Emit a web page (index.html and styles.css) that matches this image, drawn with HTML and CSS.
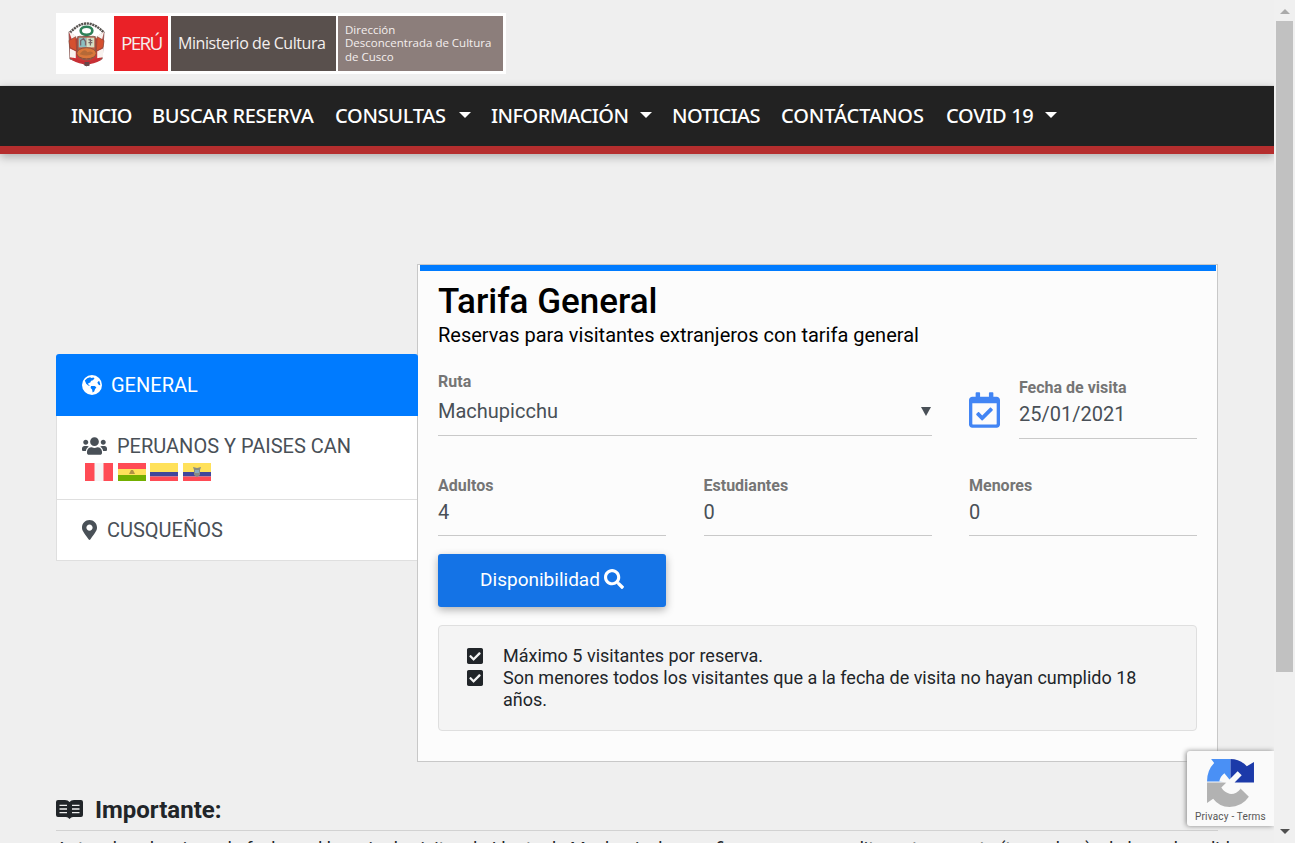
FILE: index.html
```html
<!DOCTYPE html>
<html lang="es">
<head>
<meta charset="utf-8">
<title>Reservas Machupicchu</title>
<link rel="stylesheet" href="styles.css">
</head>
<body>
<div class="page">
<header class="top">
  <div class="brand">
    <svg class="crest" viewBox="0 0 40 48">
      <path d="M3 13Q20-6 38 13" fill="none" stroke="#575350" stroke-width="2.5" stroke-dasharray="2.200 .7"/>
      <path d="M2 12l8 6 10-5 10 5 8-6-2 28-10 3-6 4-6-4-11-3z" fill="#ce3435" stroke="#74524c" stroke-width=".8"/>
      <path d="M2 12l9 5 9-5 9 5 9-5-2 8-8-2-8-2-8 2-7 2zM3 29l6 3v7l-6-1zM37 29l-6 3v7l6-1z" fill="#f8f2ee"/>
      <path d="M2 21l7-4 1 15-7-4zM38 21l-7-4-1 15 7-4z" fill="#d5502f" stroke="#894a3c" stroke-width=".7"/>
      <path d="M11 17h18v20q-9 8-18 0z" fill="#c85b43" stroke="#7e5b4e"/>
      <path d="M12 18h8v10h-8z" fill="#8bbfc0"/><path d="M20 18h8v10h-8z" fill="#d5dfc5"/>
      <path d="M14 26v-5l3-2 2 3v4M24 26v-7m-2 1l4 1m-4 2h4" stroke="#75666b" stroke-width="1.300" fill="none"/>
      <ellipse cx="20" cy="34" rx="10" ry="5.700" fill="#da783b" stroke="#8c503c"/>
      <path d="M13 35q5-7 8-2 4-2 6 1-5 4-14 1" fill="#b56937"/>
      <ellipse cx="20" cy="11" rx="6" ry="4.200" fill="#fff" stroke="#2f8159" stroke-width="2.700"/>
      <path d="M6 40q14 8 28 0" stroke="#c72f35" stroke-width="3" fill="none"/><path d="M18 43h5v4h-5z" fill="#68474a"/>
    </svg>
    <div class="peru">PERÚ</div><div class="ministry">Ministerio de Cultura</div>
    <div class="office">Dirección<br>Desconcentrada de Cultura<br>de Cusco</div>
  </div>
</header>
<nav class="nav">
  <a>INICIO</a><a>BUSCAR RESERVA</a><a class="drop">CONSULTAS</a><a class="drop">INFORMACIÓN</a><a>NOTICIAS</a><a>CONTÁCTANOS</a><a class="drop">COVID 19</a>
</nav>
<main class="main">
  <aside class="tabs">
    <div class="tab active"><svg class="i-globe" viewBox="0 0 20 20"><circle cx="10" cy="10" r="10" fill="#fff"/><path d="M2.800 5.500Q5 2.700 8 2.200l1.500.9 2-.6 1 1.200-2.100 1.700-1.300.3-.8 1.700-1.400.5-1.200 1.100 1.200.8 1 1.100-1.700-.4-2-1.800zM9 11h3.600l1.800 1.300-1.400 1.900-.8 2.400-1.600 1-.5-3.200L8.600 13zM15.300 7.800l1.400-1.900.8.6.9 3.700-1.500-.1z" fill="#007bff"/></svg><span>GENERAL</span></div>
    <div class="tab can"><div class="line"><svg class="i-users" viewBox="0 0 640 512"><path d="M96 224c35.3 0 64-28.7 64-64s-28.7-64-64-64-64 28.7-64 64 28.7 64 64 64zm448 0c35.3 0 64-28.7 64-64s-28.7-64-64-64-64 28.7-64 64 28.7 64 64 64zm32 32h-64c-17.6 0-33.5 7.1-45.1 18.6 40.3 22.1 68.9 62 75.1 109.4h66c17.7 0 32-14.3 32-32v-32c0-35.3-28.7-64-64-64zm-256 0c61.9 0 112-50.1 112-112S381.9 32 320 32 208 82.1 208 144s50.1 112 112 112zm76.8 32h-8.3c-20.8 10-43.9 16-68.5 16s-47.6-6-68.5-16h-8.3C179.6 288 128 339.6 128 403.2V432c0 26.5 21.5 48 48 48h288c26.5 0 48-21.5 48-48v-28.8c0-63.6-51.6-115.2-115.2-115.2zm-223.7-13.4C161.5 263.1 145.6 256 128 256H64c-35.3 0-64 28.7-64 64v32c0 17.7 14.3 32 32 32h65.9c6.3-47.4 34.9-87.3 75.2-109.4z"/></svg><span>PERUANOS Y PAISES CAN</span></div>
      <div class="flags">
        <svg viewBox="0 0 28 18"><path fill="#f4f4f5" d="M0 0h28v18H0z"/><path fill="#ff4b55" d="M0 0h9.5v18H0zM18.5 0H28v18h-9.5z"/></svg>
        <svg viewBox="0 0 28 18"><path fill="#ff4b55" d="M0 0h28v6H0z"/><path fill="#ffe15a" d="M0 6h28v6H0z"/><path fill="#73af00" d="M0 12h28v6H0z"/><path d="M11 11l2-4h2l2 4z" fill="#b39143"/></svg>
        <svg viewBox="0 0 28 18"><path fill="#ffe15a" d="M0 0h28v9H0z"/><path fill="#41479b" d="M0 9h28v4.5H0z"/><path fill="#ff4b55" d="M0 13.500h28V18H0z"/></svg>
        <svg viewBox="0 0 28 18"><path fill="#ffe15a" d="M0 0h28v9H0z"/><path fill="#41479b" d="M0 9h28v4.500H0z"/><path fill="#ff4b55" d="M0 13.500h28V18H0z"/><path d="M10 4l4 1 4-1-1 3v5l-3 2-3-2V7z" fill="#888b83"/><path d="M12 7h4v3h-4z" fill="#8ba9bb"/></svg>
      </div></div>
    <div class="tab cusco"><svg class="i-pin" viewBox="0 0 384 512"><path d="M172.268 501.670C26.970 291.031 0 269.413 0 192 0 85.961 85.961 0 192 0s192 85.961 192 192c0 77.413-26.970 99.031-172.268 309.670-9.535 13.774-29.930 13.773-39.464 0zM192 272c44.183 0 80-35.817 80-80s-35.817-80-80-80-80 35.817-80 80 35.817 80 80 80z"/></svg><span>CUSQUEÑOS</span></div>
  </aside>
  <section class="card">
    <div class="accent"></div>
    <h1>Tarifa General</h1>
    <p class="sub">Reservas para visitantes extranjeros con tarifa general</p>
    <div class="row first">
      <div class="field route"><label>Ruta</label><div class="value"><span>Machupicchu</span><i class="arrow"></i></div></div>
      <div class="date"><svg class="i-cal" viewBox="0 0 448 512"><path d="M400 64h-48V12c0-6.627-5.373-12-12-12h-40c-6.627 0-12 5.373-12 12v52H160V12c0-6.627-5.373-12-12-12h-40c-6.627 0-12 5.373-12 12v52H48C21.490 64 0 85.490 0 112v352c0 26.510 21.490 48 48 48h352c26.510 0 48-21.490 48-48V112c0-26.510-21.490-48-48-48zm-6 400H54a6 6 0 0 1-6-6V160h352v298a6 6 0 0 1-6 6zm-52.849-200.650L198.842 404.519c-4.705 4.667-12.303 4.637-16.971-.068l-75.091-75.699c-4.667-4.705-4.637-12.303.068-16.971l22.719-22.536c4.705-4.667 12.303-4.637 16.970.069l44.104 44.461 111.072-110.181c4.705-4.667 12.303-4.637 16.971.068l22.536 22.718c4.667 4.705 4.636 12.303-.069 16.970z"/></svg>
        <div class="field"><label>Fecha de visita</label><div class="value"><span>25/01/2021</span></div></div></div>
    </div>
    <div class="row people">
      <div class="field"><label>Adultos</label><div class="value">4</div></div>
      <div class="field"><label>Estudiantes</label><div class="value">0</div></div>
      <div class="field"><label>Menores</label><div class="value">0</div></div>
    </div>
    <button class="search"><span>Disponibilidad</span><svg viewBox="0 0 512 512"><path d="M505 442.700L405.300 343c-4.500-4.500-10.600-7-17-7H372c27.600-35.300 44-79.700 44-128C416 93.100 322.900 0 208 0S0 93.100 0 208s93.100 208 208 208c48.300 0 92.700-16.400 128-44v16.300c0 6.400 2.500 12.500 7 17l99.700 99.700c9.400 9.400 24.600 9.400 33.900 0l28.300-28.300c9.400-9.400 9.400-24.600.1-34zM208 336c-70.700 0-128-57.200-128-128 0-70.700 57.200-128 128-128 70.700 0 128 57.200 128 128 0 70.700-57.200 128-128 128z"/></svg></button>
    <div class="notes">
      <div class="note"><svg viewBox="0 32 448 448"><path d="M400 480H48c-26.510 0-48-21.490-48-48V80c0-26.510 21.490-48 48-48h352c26.510 0 48 21.490 48 48v352c0 26.510-21.490 48-48 48zm-204.686-98.059l184-184c6.248-6.248 6.248-16.379 0-22.627l-22.627-22.627c-6.248-6.248-16.379-6.249-22.628 0L184 302.745l-70.059-70.059c-6.248-6.248-16.379-6.248-22.628 0l-22.627 22.627c-6.248 6.248-6.248 16.379 0 22.627l104 104c6.249 6.250 16.379 6.250 22.628.001z"/></svg><span>Máximo 5 visitantes por reserva.</span></div>
      <div class="note"><svg viewBox="0 32 448 448"><path d="M400 480H48c-26.510 0-48-21.490-48-48V80c0-26.510 21.490-48 48-48h352c26.510 0 48 21.490 48 48v352c0 26.510-21.490 48-48 48zm-204.686-98.059l184-184c6.248-6.248 6.248-16.379 0-22.627l-22.627-22.627c-6.248-6.248-16.379-6.249-22.628 0L184 302.745l-70.059-70.059c-6.248-6.248-16.379-6.248-22.628 0l-22.627 22.627c-6.248 6.248-6.248 16.379 0 22.627l104 104c6.249 6.250 16.379 6.250 22.628.001z"/></svg><span>Son menores todos los visitantes que a la fecha de visita no hayan cumplido 18 años.</span></div>
    </div>
  </section>
</main>
<section class="important">
  <h2><svg viewBox="0 0 27 20"><path d="M0 2Q0 0 2 0h7q3 0 4.500 2Q15 0 18 0h7q2 0 2 2v13q0 2-2 2h-8q-2 0-3.500 2Q12 17 10 17H2q-2 0-2-2z"/><path d="M3.500 5.300h7.500M3.500 9h7.500M3.500 12.700h7.500M16 5.300h7.500M16 9h7.500M16 12.700h7.500" stroke="#efefef" stroke-width="1.300"/></svg><span>Importante:</span></h2>
  <p>Antes de seleccionar la fecha y el horario de visita a la Llaqta de Machupicchu, confirme que se acredite su transporte (tren o bus) y la hora de salida.</p>
</section>
</div>
<div class="scroll"><i class="up"></i><div class="thumb"></div><i class="down"></i></div>
<div class="captcha">
  <svg viewBox="0 0 46 48"><path d="M23 1v22H0Q0 12 7 5L4 1z" fill="#4a90f5"/><path d="M23 1q9 0 16 7l7-4v20H23z" fill="#1c3aa9"/><path d="M0 24h23l10 6 8 8Q34 48 22 48 12 48 6 40l-6 4z" fill="#b2b2b2"/><path d="M12 23q1-5 5-8l5 6 8-8 4 4-7 7 6 6q-5 6-11 5-5-1-8-6l5-5z" fill="#fafafa"/></svg>
  <span>Privacy - Terms</span>
</div>
</body>
</html>
```
FILE: styles.css
```css
*{box-sizing:border-box}
body{margin:0;display:flex;width:1295px;height:843px;overflow:hidden;background:#efefef;font-family:Roboto,sans-serif;color:#212529}
.page{width:1274px;height:843px;overflow:hidden;flex:none}
svg{display:block;flex:none}
.top{height:86px;padding:13px 56px;border-bottom:1px solid #e3e3e3}
.brand{width:450px;height:61px;background:#fff;padding:3px 3px 3px 11px;display:flex;font-family:"Open Sans",sans-serif;color:#f4efee}
.crest{width:39px;height:49px;margin:3px 8px 0 0}
.peru{width:54px;height:55px;background:#ea2127;font-size:19px;line-height:54px;padding-left:7px;letter-spacing:-1.7px}
.ministry{width:165px;height:55px;background:#59504d;margin-left:3px;padding-left:7px;font-size:16px;line-height:54px;white-space:nowrap;letter-spacing:-.44px}
.office{width:165px;height:55px;background:#8c7e7b;margin-left:2px;padding:7px 0 0 7px;font-size:11.5px;line-height:13.3px;white-space:nowrap}
.nav{height:68px;background:#222;border-bottom:8px solid #b52e2e;box-shadow:0 3px 9px rgba(0,0,0,.28);padding-left:71px;display:flex;align-items:center;gap:20px;font:500 20px/30px "Noto Sans",sans-serif;color:#fff}
.nav a{display:flex;align-items:center;white-space:nowrap;letter-spacing:-.3px}
.nav a:nth-child(1){width:61px;letter-spacing:-.75px}
.nav a:nth-child(2){width:163px}
.nav a:nth-child(3){width:136px;justify-content:space-between}
.nav a:nth-child(4){width:161px;justify-content:space-between;letter-spacing:-.55px}
.nav a:nth-child(5){width:89px;letter-spacing:-.6px}
.nav a:nth-child(6){width:145px;letter-spacing:-.1px}
.nav a:nth-child(7){width:111px;justify-content:space-between}
.drop::after{content:"";border:6px solid transparent;border-top-color:#fff;border-bottom:0;margin:-2px 0 0}
.main{display:flex;margin:110px 56px 0;height:498px}
.tabs{width:361px;margin-top:90px;font-size:20px;color:#495057;fill:#495057;position:relative;z-index:1}
.tab{background:#fff;border:1px solid #dfdfdf;border-top:0;border-right:0;padding-left:25px}
.active{height:62px;width:362px;background:#007bff;border:0;border-radius:3px 3px 0 0;display:flex;align-items:center;color:#fff;padding-left:26px}
.i-globe{width:20px;height:20px;margin-right:9px}
.can{height:84px;padding-top:16px}
.line{display:flex;align-items:center;height:28px}
.i-users{width:25px;height:20px;margin-right:10px}
.flags{display:flex;gap:4.700px;margin:3px 0 0 3px}
.flags svg{width:28px;height:18px}
.cusco{height:61px;display:flex;align-items:center}
.i-pin{width:15px;height:20px;margin-right:10px}
.card{width:801px;height:498px;background:#fcfcfc;border:1px solid #c8c8c8;padding:0 20px}
.accent{height:6px;margin:0 -19px 0 -18px;background:#007bff}
h1{font-size:35px;line-height:42px;font-weight:500;color:#000;margin:10px 0 0}
.sub{font-size:20px;line-height:24px;color:#000;margin:0}
.row{display:flex;justify-content:space-between}
.field{width:228px;border-bottom:1px solid #c9c9c9}
label{display:block;font-size:16px;font-weight:700;line-height:20px;padding-top:1px;color:#757575}
.value{font-size:20px;line-height:24px;color:#495057;display:flex;justify-content:space-between}
.first{height:92px;margin-top:24px}
.route{width:494px;height:65px}
.route .value{margin-top:7px}
.arrow{border:5px solid transparent;border-top:9px solid #495057;border-bottom:0;align-self:center;margin-right:1px}
.date{display:flex;width:228px}
.date .field{width:178px;height:62px;margin:6px 0 0 19px}
.date .value,.people .value{margin-top:4px}
.i-cal{width:31px;height:36px;margin-top:21px;fill:#4285f4}
.people{margin-top:12px}
.people .field{height:61px}
.search{display:flex;align-items:center;justify-content:center;gap:4px;width:228px;height:53px;margin-top:18px;border:0;border-radius:3px;background:#1473e6;box-shadow:0 3px 8px rgba(0,0,0,.3);font:19px Roboto,sans-serif;color:#fff;padding-bottom:4px}
.search svg{width:20px;height:20px;fill:#fff}
.notes{height:106px;margin-top:18px;border:1px solid #dfdfdf;border-radius:4px;background:#f4f4f4;padding:19px 28px;font-size:18px;line-height:22px}
.note{display:flex;width:700px}
.note svg{width:16px;height:16px;margin:3px 20px 0 0;fill:#212529}
.important{margin:0 56px}
.important h2{height:69px;margin:0;padding-top:28px;border-bottom:1px solid #d2d2d2;display:flex;align-items:center;gap:12px;font-size:24px;font-weight:700}
.important h2 svg{width:27px;height:20px;fill:#212529}
.important p{font-size:18px;line-height:22px;margin:7px 0 0;white-space:nowrap}
.scroll{width:21px;height:843px;background:#f0f0f0;display:flex;flex-direction:column;align-items:center;flex:none}
.up{margin-top:9px;border:5px solid transparent;border-bottom-color:#aaa;border-top:0}
.thumb{width:17px;height:651px;margin-top:7px;background:#c1c1c1}
.down{margin-top:157px;border:5px solid transparent;border-top-color:#505050;border-bottom:0}
.captcha{position:absolute;left:1187px;top:751px;width:87px;height:75px;background:#fafafa;border-radius:3px 0 0 3px;box-shadow:-1px 0 5px #888;clip-path:inset(-8px 0 -8px -8px);display:flex;flex-direction:column;align-items:center;padding-top:7px}
.captcha svg{width:47px;height:49px}
.captcha span{font-size:10px;line-height:12px;margin-top:4px;color:#555;letter-spacing:.2px;white-space:nowrap}
```
